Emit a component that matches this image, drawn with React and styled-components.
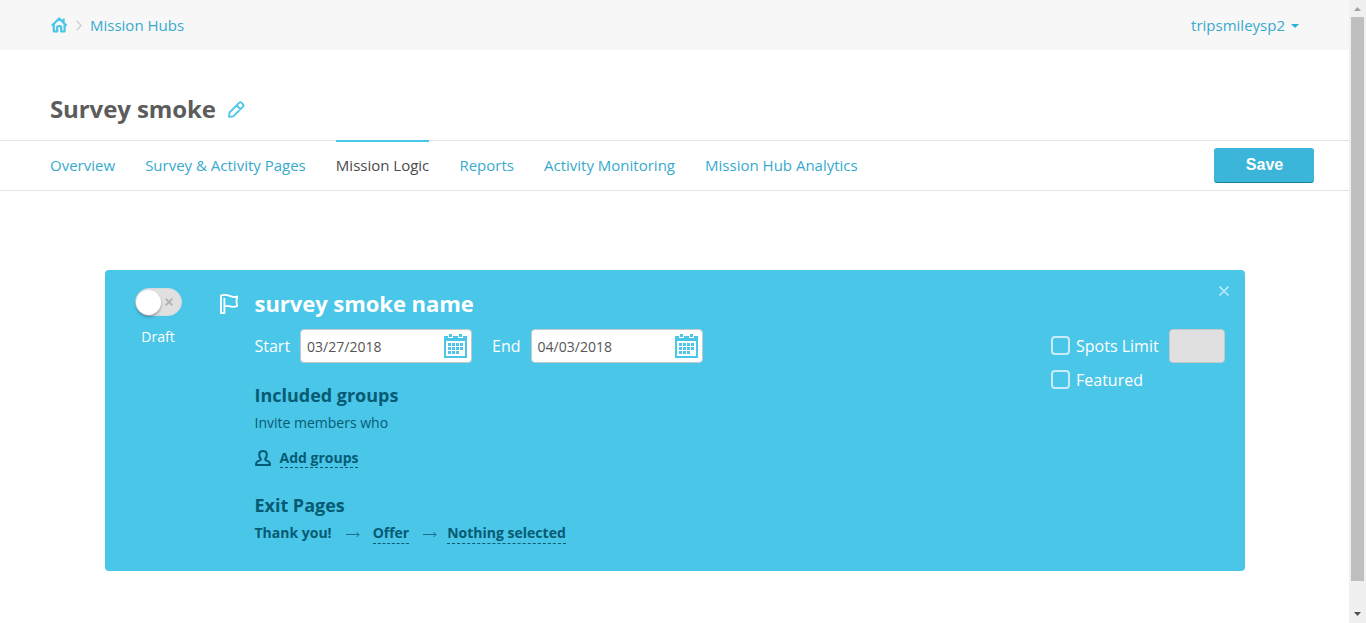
import React from "react";
import styled, { createGlobalStyle } from "styled-components";

const Global = createGlobalStyle`
  *, *::before, *::after { box-sizing: border-box; }
  body { margin: 0; background: #fff; overflow: hidden; font-family: "Open Sans", "Noto Sans", sans-serif; color: #555; }
  h1, h2, h3, p { margin: 0; }
  svg { display: block; flex: none; }
  button, input { font-family: inherit; }
`;

const Shell = styled.div`
  display: flex;
  width: 1366px;
  height: 623px;
`;
const Main = styled.main`
  width: 1349px;
  flex: none;
`;
const ScrollTrack = styled.div`
  width: 17px;
  background: #f0f0f0;
  display: flex;
  flex-direction: column;
  align-items: center;
`;
const ScrollThumb = styled.div`
  width: 13px;
  height: 564px;
  background: #bfbfbf;
`;
const ScrollArrow = styled.div`
  height: ${(p) => (p.$down ? 42 : 17)}px;
  padding-top: ${(p) => (p.$down ? 31 : 7)}px;
`;

const TopBar = styled.header`
  height: 50px;
  background: #f7f7f7;
  padding: 0 50px 0 51px;
  display: flex;
  align-items: center;
  justify-content: space-between;
`;
const Crumbs = styled.nav`
  display: flex;
  align-items: center;
`;
const Link = styled.a`
  color: #37aacd;
  font-size: 15px;
  line-height: 20px;
  white-space: nowrap;
`;
const CrumbArrow = styled.svg`
  margin: 0 8px 0 8px;
`;
const User = styled.div`
  display: flex;
  align-items: center;
  gap: 6px;
`;
const Caret = styled.svg`
  margin-top: 2px;
`;

const TitleRow = styled.div`
  height: 90px;
  padding: 39px 50px 0;
  display: flex;
  gap: 12px;
`;
const PageTitle = styled.h1`
  font-size: 24px;
  line-height: 40px;
  font-weight: 700;
  letter-spacing: -0.1px;
  color: #5c5c5c;
  white-space: nowrap;
`;
const Pencil = styled.svg`
  margin-top: 12px;
`;

const TabBar = styled.div`
  height: 51px;
  border-top: 1px solid #e3e3e3;
  border-bottom: 1px solid #e3e3e3;
  padding: 0 35px 0 50px;
  display: flex;
  justify-content: space-between;
`;
const Tabs = styled.nav`
  display: flex;
  gap: 30.1px;
`;
const Tab = styled(Link)`
  height: 50px;
  margin-top: -1px;
  padding-top: 13px;
  border-top: 2px solid ${(p) => (p.$active ? "#4ac6e9" : "transparent")};
  color: ${(p) => (p.$active ? "#4a4a4a" : "#37aacd")};
`;
const SaveButton = styled.button`
  width: 100px;
  height: 35px;
  margin-top: 7px;
  padding: 0 0 1px 1px;
  border: 0;
  border-bottom: 1px solid #17809b;
  border-radius: 3px;
  background: #3bb5d9;
  color: #fff;
  font: bold 16px "Liberation Sans", sans-serif;
`;

const Card = styled.section`
  position: relative;
  width: 1140px;
  height: 301px;
  margin: 79px 0 0 105px;
  border-radius: 4px;
  background: #4ac6e9;
  color: #fff;
  display: flex;
`;
const StatusColumn = styled.div`
  width: 106px;
  padding-top: 18px;
  display: flex;
  flex-direction: column;
  align-items: center;
`;
const Toggle = styled.div`
  width: 47px;
  height: 28px;
  border-radius: 14px;
  background: #e0e0e0;
  border: 1px solid #d3dadd;
  display: flex;
  align-items: center;
  gap: 3.5px;
`;
const Knob = styled.div`
  width: 25px;
  height: 25px;
  margin-left: 0.5px;
  border-radius: 50%;
  background: #fff;
  box-shadow: 0 2px 3px rgba(0, 0, 0, 0.3);
`;
const StatusText = styled.p`
  margin-top: 11px;
  font-size: 14px;
  line-height: 20px;
`;
const FlagIcon = styled.svg`
  margin: 24px 0 0 9px;
`;
const Details = styled.div`
  margin-left: 15.5px;
  padding-top: 17px;
  flex: 1;
`;
const MissionName = styled.h2`
  font-size: 22px;
  line-height: 32px;
  font-weight: 700;
  letter-spacing: -0.05px;
`;
const DateRow = styled.div`
  margin-top: 10px;
  height: 34px;
  display: flex;
  align-items: center;
`;
const Label = styled.span`
  font-size: 16px;
  line-height: 34px;
  white-space: nowrap;
`;
const DateField = styled.div`
  width: 172px;
  height: 34px;
  margin: 0 20px 0 10px;
  padding: 1px 4px 0 6px;
  border: 1px solid #c3c9cb;
  border-radius: 4px;
  background: #fff;
  color: #555;
  font-size: 14px;
  display: flex;
  align-items: center;
  justify-content: space-between;
`;
const SectionTitle = styled.h3`
  margin-top: ${(p) => p.$top}px;
  font-size: 18px;
  line-height: 26px;
  font-weight: 700;
  letter-spacing: -0.02px;
  color: #065b73;
`;
const Hint = styled.p`
  margin-top: 5px;
  font-size: 14px;
  line-height: 20px;
  color: #065b73;
`;
const ActionRow = styled.div`
  margin-top: ${(p) => p.$top}px;
  height: 20px;
  display: flex;
  color: #065b73;
  font-size: 14px;
  line-height: 19px;
  font-weight: 700;
`;
const DashedLink = styled.a`
  height: ${(p) => p.$height || 20}px;
  border-bottom: 1px dashed #065b73;
  white-space: nowrap;
`;
const PersonIcon = styled.svg`
  margin: 2px 9px 0 0;
`;
const FlowArrow = styled.svg`
  margin: 8px ${(p) => p.$after}px 0 14px;
`;
const Options = styled.div`
  width: 174px;
  margin-right: 20px;
  padding-top: 59px;
`;
const Option = styled.label`
  height: 34px;
  display: flex;
  align-items: center;
`;
const Box = styled.span`
  width: 19px;
  height: 19px;
  margin: 0 6px 2px 0;
  border: 2px solid #c8edf8;
  border-radius: 4px;
`;
const LimitInput = styled.div`
  width: 56px;
  height: 34px;
  margin-left: auto;
  border: 1px solid #c5c9ca;
  border-radius: 4px;
  background: #e0e0e0;
`;
const CloseIcon = styled.svg`
  position: absolute;
  top: 16px;
  right: 16px;
`;

const DAYS = [[0, 0], [1, 0], [2, 0], [3, 0], [0, 1], [1, 1], [2, 1], [3, 1], [0, 2], [1, 2], [2, 2]];

function Calendar() {
  return (
    <svg width="23" height="25" viewBox="0 0 23 25" shapeRendering="crispEdges">
      <path fill="#4ac6e9" fillRule="evenodd" d="M0 2H4V4H9V2H14V4H19V2H23V24H0ZM2 7V22H21V7Z" />
      <path fill="#4ac6e9" d="M5 0h3v3H5zM15 0h3v3h-3z" />
      {DAYS.map(([c, r]) => (
        <rect key={`${c}-${r}`} x={4 + c * 4} y={9 + r * 4} width="3" height="3" fill="#4ac6e9" />
      ))}
    </svg>
  );
}

function Arrow({ after }) {
  return (
    <FlowArrow $after={after} width="14" height="7" viewBox="0 0 14 7" fill="none" stroke="#16718b">
      <path d="M0 3.5H13M10.5 1L13 3.5L10.5 6" />
    </FlowArrow>
  );
}

const TABS = ["Overview", "Survey & Activity Pages", "Mission Logic", "Reports", "Activity Monitoring", "Mission Hub Analytics"];

export default function App() {
  return (
    <Shell>
      <Global />
      <Main>
        <TopBar>
          <Crumbs>
            <svg width="17" height="17" viewBox="0 0 17 17" fill="none" stroke="#4ac6e9" strokeWidth="2.2" strokeLinejoin="round">
              <path d="M.8 8.8L8.2 1.5L15.6 8.8M12.6 1.5V5M2.8 7.5V14.5H6.2V10.3Q6.2 9 8.2 9T10.2 10.3V14.5H13.6V7.5" />
            </svg>
            <CrumbArrow width="6" height="11" viewBox="0 0 6 11" fill="none" stroke="#d2d2d2" strokeWidth="1.5">
              <path d="M.7 .8L5 5.5L.7 10.2" />
            </CrumbArrow>
            <Link>Mission Hubs</Link>
          </Crumbs>
          <User>
            <Link>tripsmileysp2</Link>
            <Caret width="8" height="4" viewBox="0 0 8 4"><path d="M0 0H8L4 4Z" fill="#29b2d9" /></Caret>
          </User>
        </TopBar>
        <TitleRow>
          <PageTitle>Survey smoke</PageTitle>
          <Pencil width="17" height="17" viewBox="0 0 17 17" fill="none" stroke="#4ac6e9" strokeWidth="1.8" strokeLinejoin="round">
            <path d="M1 15.8L1.5 11.5L11.3 1.7Q12.3 .7 13.3 1.7L15.1 3.5Q16.1 4.5 15.1 5.5L5.3 15.3ZM8.7 4.5L12.5 8.3" />
          </Pencil>
        </TitleRow>
        <TabBar>
          <Tabs>
            {TABS.map((t) => <Tab key={t} $active={t === "Mission Logic"}>{t}</Tab>)}
          </Tabs>
          <SaveButton>Save</SaveButton>
        </TabBar>
        <Card>
          <StatusColumn>
            <Toggle>
              <Knob />
              <svg width="8" height="8" viewBox="0 0 8 8" stroke="#b0b0b0" strokeWidth="1.8"><path d="M.7 .7L7.3 7.3M7.3 .7L.7 7.3" /></svg>
            </Toggle>
            <StatusText>Draft</StatusText>
          </StatusColumn>
          <FlagIcon width="19" height="21" viewBox="0 0 19 21" fill="none" stroke="#fff" strokeWidth="1.8" strokeLinejoin="round">
            <path d="M1 1.5V19.2H4.4V12.8C8 9.5 10 15 17.2 12L16.4 7.4L17.2 2.5C11.5 5 9 -1 1 1.5ZM4.4 4V12.8" />
          </FlagIcon>
          <Details>
            <MissionName>survey smoke name</MissionName>
            <DateRow>
              <Label>Start</Label>
              <DateField>03/27/2018<Calendar /></DateField>
              <Label>End</Label>
              <DateField>04/03/2018<Calendar /></DateField>
            </DateRow>
            <SectionTitle $top={19}>Included groups</SectionTitle>
            <Hint>Invite members who</Hint>
            <ActionRow $top={15}>
              <PersonIcon width="16" height="16" viewBox="0 0 16 16" fill="none" stroke="#065b73" strokeWidth="2" strokeLinejoin="round">
                <path d="M8 1C3.2 1 3.5 6 5.8 9.2Q5.9 10.4 3.7 10.9Q1 11.7 1 15H15Q15 11.7 12.3 10.9Q10.1 10.4 10.2 9.2C12.5 6 12.8 1 8 1Z" />
              </PersonIcon>
              <DashedLink>Add groups</DashedLink>
            </ActionRow>
            <SectionTitle $top={24}>Exit Pages</SectionTitle>
            <ActionRow $top={5}>
              <span>Thank you!</span>
              <Arrow after={13} />
              <DashedLink $height={21}>Offer</DashedLink>
              <Arrow after={10} />
              <DashedLink $height={21}>Nothing selected</DashedLink>
            </ActionRow>
          </Details>
          <Options>
            <Option><Box /><Label>Spots Limit</Label><LimitInput /></Option>
            <Option><Box /><Label>Featured</Label></Option>
          </Options>
          <CloseIcon width="10" height="10" viewBox="0 0 10 10" stroke="#b5e8f7" strokeWidth="1.6"><path d="M.5 .5L9.5 9.5M9.5 .5L.5 9.5" /></CloseIcon>
        </Card>
      </Main>
      <ScrollTrack>
        <ScrollArrow><svg width="7" height="4" viewBox="0 0 7 4"><path d="M0 4L3.5 0L7 4Z" fill="#a3a3a3" /></svg></ScrollArrow>
        <ScrollThumb />
        <ScrollArrow $down><svg width="7" height="4" viewBox="0 0 7 4"><path d="M0 0H7L3.5 4Z" fill="#505050" /></svg></ScrollArrow>
      </ScrollTrack>
    </Shell>
  );
}
